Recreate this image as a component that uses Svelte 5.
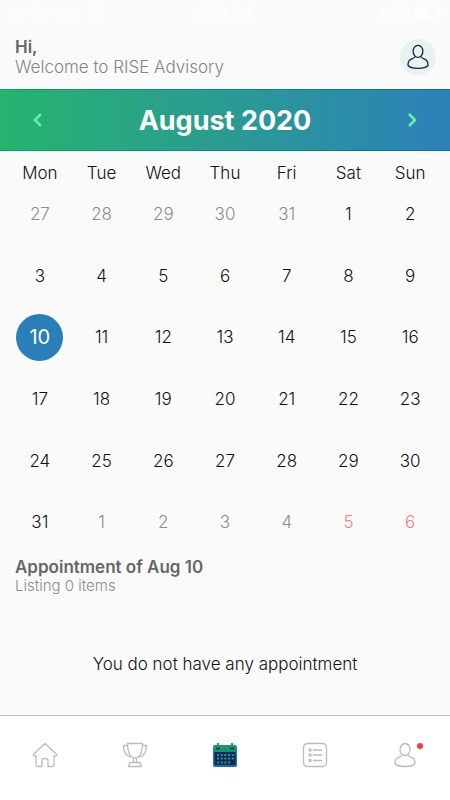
<script>
  const weekdays = ['Mon', 'Tue', 'Wed', 'Thu', 'Fri', 'Sat', 'Sun'];

  let selected = $state(10);

  const days = [];
  for (let i = 27; i <= 31; i++) days.push({ day: i, type: 'outside' });
  for (let i = 1; i <= 31; i++) days.push({ day: i, type: 'current' });
  for (let i = 1; i <= 6; i++) days.push({ day: i, type: i > 4 ? 'weekend' : 'outside' });

  function select(item) {
    if (item.type === 'current') selected = item.day;
  }
</script>

<div class="app">
  <div class="status">
    <div class="status-side">
      <span>No Service</span>
      <svg width="18" height="13" viewBox="0 0 18 13" fill="none" stroke="#fff" stroke-width="2.4">
        <path d="M1 4.6a11.5 11.5 0 0 1 16 0M3.8 7.6a7.4 7.4 0 0 1 10.4 0" />
        <path d="M9 12.5 6.2 9.8a4 4 0 0 1 5.6 0z" fill="#fff" stroke="none" />
      </svg>
    </div>
    <strong>3:23 PM</strong>
    <div class="status-side right">
      <span>60%</span>
      <svg width="27" height="12" viewBox="0 0 27 12">
        <rect x="0.5" y="0.5" width="23" height="11" rx="2.5" fill="none" stroke="#fff" />
        <rect x="2" y="2" width="12" height="8" rx="1" fill="#fff" />
        <path d="M25 4v4q1.5-.5 1.5-2T25 4" fill="#fff" />
      </svg>
    </div>
  </div>

  <header>
    <div>
      <h1>Hi,</h1>
      <p>Welcome to RISE Advisory</p>
    </div>
    <button class="avatar" aria-label="Profile">
      <svg width="24" height="26" viewBox="0 0 24 26" fill="none" stroke="#17204f" stroke-width="1.3">
        <ellipse cx="12" cy="7.3" rx="4.9" ry="6" />
        <path d="M9 12.5c-.3 1.7-2.2 2-4.2 2.9C2.6 16.4 2 18.500 2 21.500 3.500 23.500 7 24.3 12 24.3s8.500-.8 10-2.8c0-3-.6-5.1-2.8-6.1-2-.9-3.9-1.2-4.2-2.9" />
      </svg>
    </button>
  </header>

  <div class="month">
    <button aria-label="Previous month">
      <svg width="10" height="16" viewBox="0 0 10 16"><path d="M8 2 2 8l6 6" /></svg>
    </button>
    <h2>August 2020</h2>
    <button aria-label="Next month">
      <svg width="10" height="16" viewBox="0 0 10 16"><path d="m2 2 6 6-6 6" /></svg>
    </button>
  </div>

  <div class="weekdays">
    {#each weekdays as name}
      <span>{name}</span>
    {/each}
  </div>
  <div class="days">
    {#each days as item}
      <button
        class={item.type}
        class:selected={item.type === 'current' && item.day === selected}
        onclick={() => select(item)}
      >
        <span>{item.day}</span>
      </button>
    {/each}
  </div>

  <section>
    <h3>Appointment of Aug {selected}</h3>
    <p>Listing 0 items</p>
    <div class="empty">You do not have any appointment</div>
  </section>

  <nav>
    <a href="#home" aria-label="Home">
      <svg width="26" height="26" viewBox="0 0 26 26">
        <path d="M13 1.5 1.5 12.3c-.6.8 0 1.7.9 1.7H4v8.5q0 2 2 2h4V18.500q0-2 2-2h2q2 0 2 2v6h4q2 0 2-2V14h1.6c.9 0 1.5-.9.9-1.7z" />
      </svg>
    </a>
    <a href="#awards" aria-label="Awards">
      <svg width="26" height="26" viewBox="0 0 26 26">
        <path d="M5.5 1.5h15c0 8-2.5 14.5-7.5 14.5S5.5 9.5 5.5 1.5z" />
        <path d="M5.6 3.5H1.5c0 6 2.5 10.5 7.5 11.5M20.4 3.5h4.1c0 6-2.5 10.5-7.5 11.5M11.5 16v4.5M14.5 16v4.5M8 20.5h10l1.5 4h-13z" />
      </svg>
    </a>
    <a href="#calendar" aria-label="Calendar" aria-current="page">
      <svg class="calendar" width="26" height="26" viewBox="0 0 26 26">
        <defs>
          <linearGradient id="cal" x1="0" y1="0" x2="0" y2="1">
            <stop offset="0" stop-color="#159c68" />
            <stop offset="1" stop-color="#146eac" />
          </linearGradient>
        </defs>
        <rect x="1" y="3" width="24" height="22" rx="2" fill="url(#cal)" />
        <path d="M2.5 10h21v13h-21z" fill="#142653" />
        <path d="M5 1h2v5H5zM19 1h2v5h-2z" fill="#159c68" />
        <path d="M4 6.5h4M18 6.5h4" stroke="#142653" stroke-width="1.5" />
        <path d="M5 13h17M5 16.5h17M5 20.5h13.5" stroke="#249aa0" stroke-width="2" stroke-dasharray="2 1.7" />
      </svg>
    </a>
    <a href="#list" aria-label="List">
      <svg width="26" height="26" viewBox="0 0 26 26">
        <rect x="1.5" y="1.5" width="23" height="23" rx="4" />
        <path d="M11 8h9M11 13h9M11 18.500h9" />
        <path d="M6.5 8h3M6.5 13h3M6.5 18.5h3" stroke-width="3" />
      </svg>
    </a>
    <a href="#profile" aria-label="Profile, new activity">
      <svg width="26" height="26" viewBox="0 0 26 26">
        <ellipse cx="13" cy="7.5" rx="5" ry="6" />
        <path d="M10 13c-.3 1.7-2.2 1.8-4.2 2.7-2.2 1-2.8 2.8-2.8 5.8 1.5 2 5 3 10 3s8.5-1 10-3c0-3-.6-4.8-2.8-5.8-2-.9-3.9-1-4.2-2.7" />
      </svg>
      <i class="dot"></i>
    </a>
  </nav>
</div>

<style>
  :global(body) {
    margin: 0;
    background: #fafafa;
  }

  .app {
    display: flex;
    flex-direction: column;
    min-height: 100vh;
    font-family: Inter, "Liberation Sans", sans-serif;
    font-size: 17px;
    font-weight: 300;
    color: #111;
  }

  h1, h2, h3, p {
    margin: 0;
  }

  button {
    padding: 0;
    border: none;
    background: none;
    font: inherit;
    color: inherit;
    cursor: pointer;
  }

  .status {
    display: flex;
    align-items: center;
    justify-content: space-between;
    height: 25px;
    padding: 0 8px;
    font-size: 14px;
    font-weight: 400;
    color: #fff;
  }

  .status strong {
    font-weight: 600;
  }

  .status-side {
    display: flex;
    flex: 1;
    align-items: center;
    gap: 6px;
  }

  .right {
    justify-content: flex-end;
    gap: 4px;
  }

  header {
    display: flex;
    align-items: center;
    justify-content: space-between;
    height: 64px;
    padding: 0 14px 0 15px;
    line-height: 20px;
  }

  h1, h3 {
    font-size: 17px;
    font-weight: 600;
    color: #666;
  }

  header p {
    color: #858585;
  }

  .avatar {
    display: grid;
    place-items: center;
    width: 36px;
    height: 36px;
    border-radius: 50%;
    background: #e9f2ef;
  }

  .month {
    display: flex;
    align-items: center;
    justify-content: space-between;
    box-sizing: border-box;
    height: 62px;
    padding: 0 26px;
    border-top: 1px solid transparent;
    border-bottom: 1px solid transparent;
    background:
      linear-gradient(90deg, #27b36f, #2a9b93 50%, #2c80b9) padding-box,
      linear-gradient(90deg, #06a85b, #078b87 50%, #086eae) border-box;
  }

  .month h2 {
    font-size: 27px;
    font-weight: 700;
    color: #fff;
  }

  .month button {
    display: grid;
    place-items: center;
    width: 24px;
    height: 40px;
  }

  .month path {
    fill: none;
    stroke: #65f0ab;
    stroke-width: 2.5;
  }

  .weekdays, .days {
    display: grid;
    grid-template-columns: repeat(7, 1fr);
    padding: 0 9px;
    text-align: center;
  }

  .weekdays {
    padding-top: 6px;
    line-height: 32px;
    height: 26px;
  }

  .days button {
    display: grid;
    place-items: center;
    aspect-ratio: 1;
  }

  .days span {
    display: grid;
    place-items: center;
    width: 47px;
    height: 47px;
    border-radius: 50%;
  }

  .days .outside {
    color: #8c8c8c;
  }

  .days .weekend {
    color: #ee7d7d;
  }

  .days .selected span {
    background: #2980b9;
    color: #fff;
    font-size: 20px;
    font-weight: 400;
  }

  section {
    flex: 1;
    padding: 4px 15px 0;
    line-height: 20px;
  }

  section p {
    font-size: 15px;
    line-height: 18px;
    color: #8c8c8c;
  }

  .empty {
    padding: 59px 0 40px;
    text-align: center;
  }

  nav {
    display: grid;
    grid-template-columns: repeat(5, 1fr);
    box-sizing: border-box;
    height: 85px;
    padding-top: 26px;
    border-top: 1px solid #bbb;
    background: #fff;
  }

  nav a {
    position: relative;
    height: 26px;
    text-align: center;
  }

  nav svg {
    display: block;
    margin: 0 auto;
    fill: none;
    stroke: #bcbcbc;
    stroke-width: 1.3;
  }

  nav .calendar {
    stroke: none;
  }

  .dot {
    position: absolute;
    top: 1px;
    left: calc(50% + 12px);
    width: 6px;
    height: 6px;
    border-radius: 50%;
    background: #f83b32;
  }
</style>
